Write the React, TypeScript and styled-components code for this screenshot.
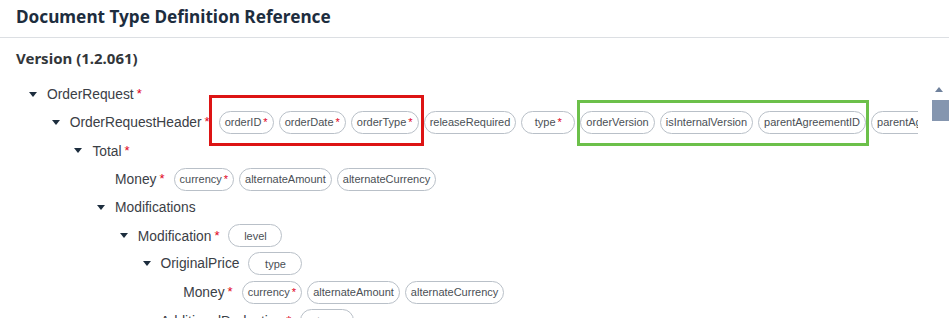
import React from "react";
import styled, { createGlobalStyle, css } from "styled-components";

const GlobalStyle = createGlobalStyle`
  html, body {
    margin: 0;
    padding: 0;
    background: #ffffff;
  }
  body {
    font-family: "Liberation Sans", Arial, sans-serif;
    overflow: hidden;
  }
`;

const Page = styled.div`
  width: 949px;
  height: 318px;
  overflow: hidden;
`;

const Header = styled.div`
  height: 38px;
  box-sizing: border-box;
  padding: 0 16px 4px;
  border-bottom: 1px solid #dcdfe3;
  display: flex;
  align-items: center;
`;

const Title = styled.h1`
  margin: 0;
  font-family: "Noto Sans", "Open Sans", sans-serif;
  font-size: 17.2px;
  font-weight: 700;
  color: #1d2d3e;
`;

const Version = styled.h2`
  margin: 0;
  padding: 9px 16px 0;
  height: 33px;
  box-sizing: border-box;
  font-family: "Noto Sans", "Open Sans", sans-serif;
  font-size: 15px;
  font-weight: 700;
  color: #32363a;
  line-height: 22px;
`;

const TreePanel = styled.div`
  display: flex;
  margin-top: 9px;
`;

const TreeViewport = styled.div`
  width: 918px;
  flex: none;
  overflow: hidden;
`;

const Scrollbar = styled.div`
  flex: 1;
  display: flex;
  flex-direction: column;
  align-items: flex-end;
  padding-top: 7px;
`;

const ScrollUp = styled.div`
  width: 0;
  height: 0;
  margin-right: 6px;
  border-left: 4px solid transparent;
  border-right: 4px solid transparent;
  border-bottom: 5px solid #6f819c;
`;

const ScrollThumb = styled.div`
  width: 17px;
  height: 21px;
  margin-top: 8px;
  background: #8596af;
`;

const Row = styled.div<{ $level: number }>`
  display: flex;
  align-items: center;
  height: 28.3px;
  padding-left: ${(p) => 25 + p.$level * 22.7}px;
  white-space: nowrap;
`;

const Toggle = styled.span`
  flex: none;
  width: 22px;
  display: flex;
  padding-left: 4px;
  box-sizing: border-box;
`;

const Caret = styled.span`
  width: 0;
  height: 0;
  border-left: 4px solid transparent;
  border-right: 4px solid transparent;
  border-top: 5px solid #1d2d3e;
`;

const Label = styled.span`
  flex: none;
  font-size: 13.8px;
  color: #3b4046;
`;

const Required = styled.span<{ $small?: boolean }>`
  color: #e0001b;
  font-size: ${(p) => (p.$small ? 11 : 13)}px;
  margin-left: ${(p) => (p.$small ? 2 : 3)}px;
  vertical-align: 1px;
`;

const Attrs = styled.div`
  display: flex;
  gap: 5px;
  margin-left: 9px;
  flex: none;
`;

const Group = styled.div<{ $mark: "red" | "green" }>`
  display: flex;
  gap: 5px;
  position: relative;

  &::after {
    content: "";
    position: absolute;
    pointer-events: none;
    border: 3px solid;
    ${(p) =>
      p.$mark === "red"
        ? css`
            border-color: #dd1414;
            inset: -16px -5px -12px -10px;
          `
        : css`
            border-color: #6cc04a;
            inset: -11px -3px -12px -3px;
          `}
  }
`;

const Pill = styled.span`
  flex: none;
  display: inline-flex;
  align-items: center;
  justify-content: center;
  height: 23px;
  min-width: 54px;
  box-sizing: border-box;
  padding: 0 5px;
  border: 1px solid #b9c0c8;
  border-radius: 12px;
  font-size: 11px;
  color: #4a4f55;
`;

type Attr = { name: string; req?: boolean };
type AttrGroup = { mark?: "red" | "green"; items: Attr[] };
type Node = {
  level: number;
  label: string;
  req?: boolean;
  open?: boolean;
  attrs?: AttrGroup[];
};

const money: AttrGroup[] = [
  {
    items: [
      { name: "currency", req: true },
      { name: "alternateAmount" },
      { name: "alternateCurrency" },
    ],
  },
];

const rows: Node[] = [
  { level: 0, label: "OrderRequest", req: true, open: true },
  {
    level: 1,
    label: "OrderRequestHeader",
    req: true,
    open: true,
    attrs: [
      {
        mark: "red",
        items: [
          { name: "orderID", req: true },
          { name: "orderDate", req: true },
          { name: "orderType", req: true },
        ],
      },
      { items: [{ name: "releaseRequired" }, { name: "type", req: true }] },
      {
        mark: "green",
        items: [
          { name: "orderVersion" },
          { name: "isInternalVersion" },
          { name: "parentAgreementID" },
        ],
      },
      { items: [{ name: "parentAgreementPayloadID" }, { name: "requisitionID" }] },
    ],
  },
  { level: 2, label: "Total", req: true, open: true },
  { level: 3, label: "Money", req: true, attrs: money },
  { level: 3, label: "Modifications", open: true },
  { level: 4, label: "Modification", req: true, open: true, attrs: [{ items: [{ name: "level" }] }] },
  { level: 5, label: "OriginalPrice", open: true, attrs: [{ items: [{ name: "type" }] }] },
  { level: 6, label: "Money", req: true, attrs: money },
  { level: 5, label: "AdditionalDeduction", req: true, open: true, attrs: [{ items: [{ name: "type" }] }] },
];

const AttrPill = ({ attr }: { attr: Attr }) => (
  <Pill>
    {attr.name}
    {attr.req && <Required $small>*</Required>}
  </Pill>
);

const TreeRow = ({ node }: { node: Node }) => (
  <Row $level={node.level}>
    <Toggle>{node.open && <Caret />}</Toggle>
    <Label>
      {node.label}
      {node.req && <Required>*</Required>}
    </Label>
    {node.attrs && (
      <Attrs>
        {node.attrs.map((g, i) =>
          g.mark ? (
            <Group key={i} $mark={g.mark}>
              {g.items.map((a) => (
                <AttrPill key={a.name} attr={a} />
              ))}
            </Group>
          ) : (
            g.items.map((a) => <AttrPill key={a.name} attr={a} />)
          )
        )}
      </Attrs>
    )}
  </Row>
);

export default function App() {
  return (
    <Page>
      <GlobalStyle />
      <Header>
        <Title>Document Type Definition Reference</Title>
      </Header>
      <Version>Version (1.2.061)</Version>
      <TreePanel>
        <TreeViewport>
          {rows.map((n, i) => (
            <TreeRow key={i} node={n} />
          ))}
        </TreeViewport>
        <Scrollbar>
          <ScrollUp />
          <ScrollThumb />
        </Scrollbar>
      </TreePanel>
    </Page>
  );
}
